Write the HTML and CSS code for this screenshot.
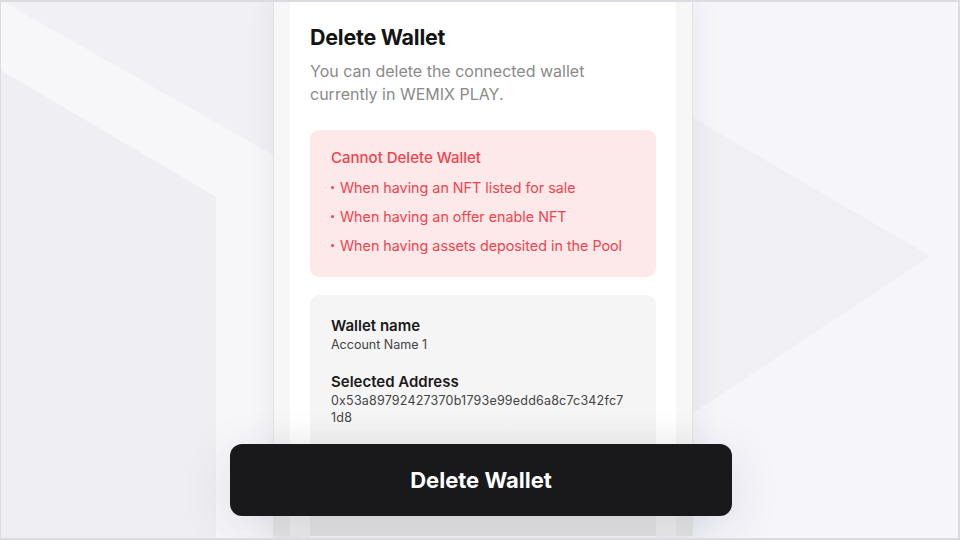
FILE: index.html
```html
<!DOCTYPE html>
<html lang="en">
<head>
<meta charset="utf-8">
<title>Delete Wallet</title>
<link rel="stylesheet" href="styles.css">
</head>
<body>
<div class="stage">
  <svg class="backdrop" width="960" height="540" viewBox="0 0 960 540" aria-hidden="true">
    <rect x="0" y="0" width="960" height="540" fill="#f5f5fa"/>
    <polygon points="0,0 300,0 300,540 0,540" fill="#f1f0f5"/>
    <polygon points="0,0 273,155 273,540 216,540 216,197 0,70" fill="#f7f7fa"/>
    <polygon points="0,70 216,197 216,540 0,540" fill="#efeef3"/>
    <polygon points="693,118 930,256 693,413" fill="#f0eff4"/>
  </svg>

  <div class="phone">
    <div class="screen">
      <h1 class="title">Delete Wallet</h1>
      <p class="lead">You can delete the connected wallet<br>currently in WEMIX PLAY.</p>

      <div class="alert">
        <h2 class="alert-title">Cannot Delete Wallet</h2>
        <ul class="alert-list">
          <li>When having an NFT listed for sale</li>
          <li>When having an offer enable NFT</li>
          <li>When having assets deposited in the Pool</li>
        </ul>
      </div>

      <div class="info">
        <div class="field">
          <div class="field-label">Wallet name</div>
          <div class="field-value">Account Name 1</div>
        </div>
        <div class="field">
          <div class="field-label">Selected Address</div>
          <div class="field-value mono">0x53a89792427370b1793e99edd6a8c7c342fc71d8</div>
        </div>
      </div>
    </div>
    <div class="fade"></div>
  </div>

  <button class="cta" type="button">Delete Wallet</button>
</div>
</body>
</html>
```

FILE: styles.css
```css
* { box-sizing: border-box; }

html, body {
  margin: 0;
  padding: 0;
  width: 960px;
  height: 540px;
  overflow: hidden;
  font-family: Inter, "Noto Sans", sans-serif;
}

.stage {
  position: relative;
  width: 960px;
  height: 540px;
  display: flex;
  padding-left: 272px;
  border: 2px solid #dcdce0;
  border-left-width: 1px;
  overflow: hidden;
}

.backdrop {
  position: absolute;
  left: -1px;
  top: -2px;
  z-index: 0;
}

.phone {
  position: relative;
  z-index: 1;
  width: 420px;
  height: 100%;
  margin-top: -2px;
  background: #f7f7f7;
  border-left: 1px solid #e3e3e7;
  border-right: 1px solid #e3e3e7;
  padding: 0 16px;
  box-shadow: 0 0 28px rgba(40, 40, 70, 0.08);
}

.screen {
  background: #ffffff;
  height: 100%;
  padding: 23px 20px 0;
}

.title {
  margin: 0;
  font-size: 21.5px;
  line-height: 28px;
  font-weight: 700;
  color: #141414;
  letter-spacing: -0.25px;
}

.lead {
  margin: 9px 0 0;
  font-size: 16px;
  line-height: 23px;
  color: #8a8a8a;
}

.alert {
  margin-top: 24px;
  background: #fee9ea;
  border-radius: 9px;
  padding: 17px 21px 17px;
  color: #f2434c;
}

.alert-title {
  margin: 0;
  font-size: 15px;
  line-height: 22px;
  font-weight: 500;
}

.alert-list {
  list-style: none;
  margin: 4px 0 0;
  padding: 0;
}

.alert-list li {
  position: relative;
  font-size: 14.3px;
  line-height: 29px;
  padding-left: 9px;
}

.alert-list li::before {
  content: "";
  position: absolute;
  left: 0;
  top: 13px;
  width: 3px;
  height: 3px;
  border-radius: 50%;
  background: #f2434c;
}

.info {
  margin-top: 18px;
  background: #f5f5f5;
  border-radius: 9px;
  padding: 21px 21px 40px;
  height: 260px;
}

.field + .field { margin-top: 18px; }

.field-label {
  font-size: 15px;
  line-height: 20px;
  font-weight: 600;
  color: #1a1a1a;
}

.field-value {
  font-size: 12.5px;
  line-height: 18px;
  color: #444;
}

.mono {
  line-height: 17px;
  letter-spacing: 0.2px;
  word-break: break-all;
  max-width: 296px;
}

.fade {
  position: absolute;
  left: 0;
  right: 0;
  bottom: 0;
  height: 115px;
  background: linear-gradient(to bottom, rgba(0,0,0,0) 0%, rgba(0,0,0,0.05) 45%, rgba(0,0,0,0.08) 100%);
  pointer-events: none;
}

.cta {
  position: absolute;
  z-index: 2;
  left: 229px;
  top: 442px;
  width: 502px;
  height: 72px;
  border: 0;
  border-radius: 12px;
  background: #19191b;
  color: #ffffff;
  font-family: Inter, "Noto Sans", sans-serif;
  font-size: 22px;
  font-weight: 700;
  letter-spacing: 0;
  box-shadow: 0 12px 50px rgba(40, 40, 70, 0.12);
}
```
